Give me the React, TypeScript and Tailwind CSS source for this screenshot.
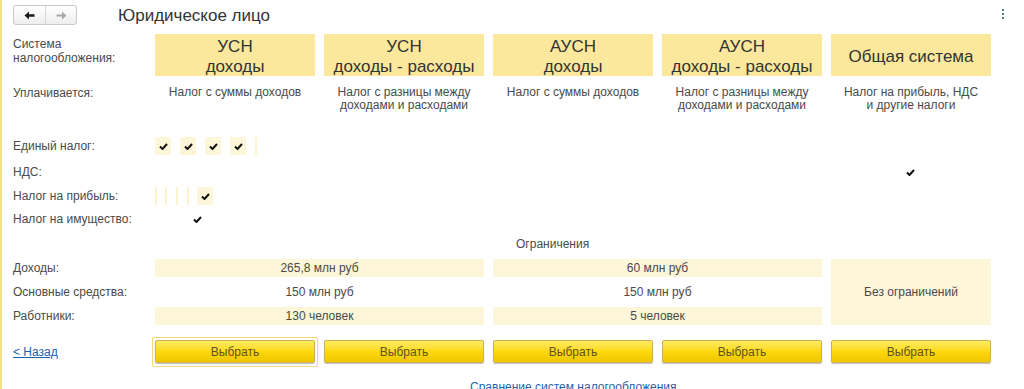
import React from "react";

const headers: string[][] = [
  ["УСН", "доходы"],
  ["УСН", "доходы - расходы"],
  ["АУСН", "доходы"],
  ["АУСН", "доходы - расходы"],
  ["Общая система"],
];

const payments: string[][] = [
  ["Налог с суммы доходов"],
  ["Налог с разницы между", "доходами и расходами"],
  ["Налог с суммы доходов"],
  ["Налог с разницы между", "доходами и расходами"],
  ["Налог на прибыль, НДС", "и другие налоги"],
];

function Check() {
  return (
    <svg width="9" height="7" viewBox="0 0 9 7" className="block">
      <path d="M1 3.5 L3.5 6 L8 1" fill="none" stroke="#111" strokeWidth="2" strokeLinejoin="miter" />
    </svg>
  );
}

function CheckCell({ className = "" }: { className?: string }) {
  return (
    <div className={"w-4 h-[18px] bg-[#fdf6d8] flex items-center justify-center " + className}>
      <Check />
    </div>
  );
}

function Label({ children }: { children: React.ReactNode }) {
  return <div className="w-[142px] shrink-0 text-[12px] leading-[14px]">{children}</div>;
}

export default function App() {
  return (
    <div className="min-h-[389px] border-l-2 border-[#f3df86] bg-white font-['Liberation_Sans',Arial,sans-serif] text-[#4a4a4a]">
      {/* top bar */}
      <div className="flex items-start pt-[5px] pl-[11px] h-[30px]">
        <div className="flex w-[64px] h-[20px] rounded-[3px] border border-[#c9c9c9] bg-gradient-to-b from-white to-[#eeeeee] overflow-hidden">
          <div className="w-[32px] flex items-center justify-center border-r border-[#d6d6d6]">
            <svg width="11" height="9" viewBox="0 0 11 9">
              <path d="M0.5 4.5 L5 0.5 L5 3.2 L10.5 3.2 L10.5 5.8 L5 5.8 L5 8.5 Z" fill="#1a1a1a" />
            </svg>
          </div>
          <div className="flex-1 flex items-center justify-center">
            <svg width="11" height="9" viewBox="0 0 11 9">
              <path d="M10.5 4.5 L6 0.5 L6 3.5 L0.5 3.5 L0.5 5.5 L6 5.5 L6 8.5 Z" fill="#a8a8a8" />
            </svg>
          </div>
        </div>
        <div className="ml-[41px] mt-[1px] text-[17px] leading-[20px] text-[#333]">Юридическое лицо</div>
        <div className="ml-auto mr-[20px] mt-[4px] flex flex-col gap-[2px]">
          <div className="w-[2px] h-[2px] bg-[#4f7f80]" />
          <div className="w-[2px] h-[2px] bg-[#4f7f80]" />
          <div className="w-[2px] h-[2px] bg-[#4f7f80]" />
        </div>
      </div>

      {/* regime headers */}
      <div className="flex pl-[11px] mt-[4px]">
        <Label>
          <div className="pt-[3px]">
            Система
            <br />
            налогообложения:
          </div>
        </Label>
        <div className="flex gap-[9px]">
          {headers.map((h, i) => (
            <div
              key={i}
              className={
                "w-[160px] h-[42px] bg-[#fbe89c] flex flex-col items-center text-[17px] leading-[20px] text-[#333] " +
                (h.length === 1 ? "justify-center pt-[3px]" : "pt-[3px]")
              }
            >
              {h.map((t, j) => (
                <div key={j}>{t}</div>
              ))}
            </div>
          ))}
        </div>
      </div>

      {/* what is paid */}
      <div className="flex pl-[11px] mt-[10px] h-[44px]">
        <Label>Уплачивается:</Label>
        <div className="flex gap-[9px] text-[12px] leading-[13px]">
          {payments.map((p, i) => (
            <div key={i} className="w-[160px] text-center">
              {p.map((t, j) => (
                <div key={j}>{t}</div>
              ))}
            </div>
          ))}
        </div>
      </div>

      {/* single tax */}
      <div className="flex items-center pl-[11px] mt-[7px] h-[18px]">
        <Label>Единый налог:</Label>
        <div className="flex items-center gap-[9px]">
          <CheckCell />
          <CheckCell />
          <CheckCell />
          <CheckCell />
          <div className="w-[2px] h-[18px] bg-[#fdf3cf]" />
        </div>
      </div>

      {/* VAT */}
      <div className="flex items-center pl-[11px] mt-[8px] h-[18px]">
        <Label>НДС:</Label>
        <div className="ml-[751px]">
          <Check />
        </div>
      </div>

      {/* profit tax */}
      <div className="flex items-center pl-[11px] mt-[6px] h-[18px]">
        <Label>Налог на прибыль:</Label>
        <div className="flex items-center">
          <div className="w-[2px] h-[18px] bg-[#fdf3cf]" />
          <div className="w-[2px] h-[18px] bg-[#fdf3cf] ml-[8px]" />
          <div className="w-[2px] h-[18px] bg-[#fdf3cf] ml-[9px]" />
          <div className="w-[2px] h-[18px] bg-[#fdf3cf] ml-[9px]" />
          <CheckCell className="ml-[8px]" />
        </div>
      </div>

      {/* property tax */}
      <div className="flex items-center pl-[11px] mt-[5px] h-[18px]">
        <Label>Налог на имущество:</Label>
        <div className="ml-[38px]">
          <Check />
        </div>
      </div>

      {/* limits */}
      <div className="pl-[514px] mt-[8px] h-[16px] text-[12px] leading-[16px]">Ограничения</div>

      <div className="flex pl-[11px] mt-[7px] text-[12px]">
        <div className="w-[142px] flex flex-col gap-[6px]">
          <div className="h-[18px] leading-[18px]">Доходы:</div>
          <div className="h-[18px] leading-[18px]">Основные средства:</div>
          <div className="h-[18px] leading-[18px]">Работники:</div>
        </div>
        <div className="w-[329px] flex flex-col gap-[6px] text-center">
          <div className="h-[18px] leading-[18px] bg-[#fdf6d8]">265,8 млн руб</div>
          <div className="h-[18px] leading-[18px]">150 млн руб</div>
          <div className="h-[18px] leading-[18px] bg-[#fdf6d8]">130 человек</div>
        </div>
        <div className="ml-[9px] w-[329px] flex flex-col gap-[6px] text-center">
          <div className="h-[18px] leading-[18px] bg-[#fdf6d8]">60 млн руб</div>
          <div className="h-[18px] leading-[18px]">150 млн руб</div>
          <div className="h-[18px] leading-[18px] bg-[#fdf6d8]">5 человек</div>
        </div>
        <div className="ml-[9px] w-[160px] bg-[#fdf6d8] flex items-center justify-center">Без ограничений</div>
      </div>

      {/* buttons */}
      <div className="flex items-center pl-[11px] mt-[15px] h-[23px]">
        <Label>
          <a href="#" className="text-[#1f5fae] underline">
            &lt; Назад
          </a>
        </Label>
        <div className="flex gap-[9px]">
          {[0, 1, 2, 3, 4].map((i) => (
            <div key={i} className="relative w-[160px]">
              {i === 0 && (
                <div className="absolute -left-[3px] -right-[3px] -top-[3px] -bottom-[4px] border border-[#f3d977] rounded-[2px]" />
              )}
              <div className="relative h-[23px] rounded-[2px] border border-[#c9b256] bg-gradient-to-b from-[#ffeb5c] via-[#fbd90c] to-[#efc600] shadow-[0_1px_1px_rgba(0,0,0,0.25)] flex items-center justify-center text-[12px] text-[#5f5222]">
                Выбрать
              </div>
            </div>
          ))}
        </div>
      </div>

      <div className="pl-[468px] mt-[17px] text-[12px] leading-[14px]">
        <a href="#" className="text-[#1f5fae] underline">
          Сравнение систем налогообложения
        </a>
      </div>
    </div>
  );
}
